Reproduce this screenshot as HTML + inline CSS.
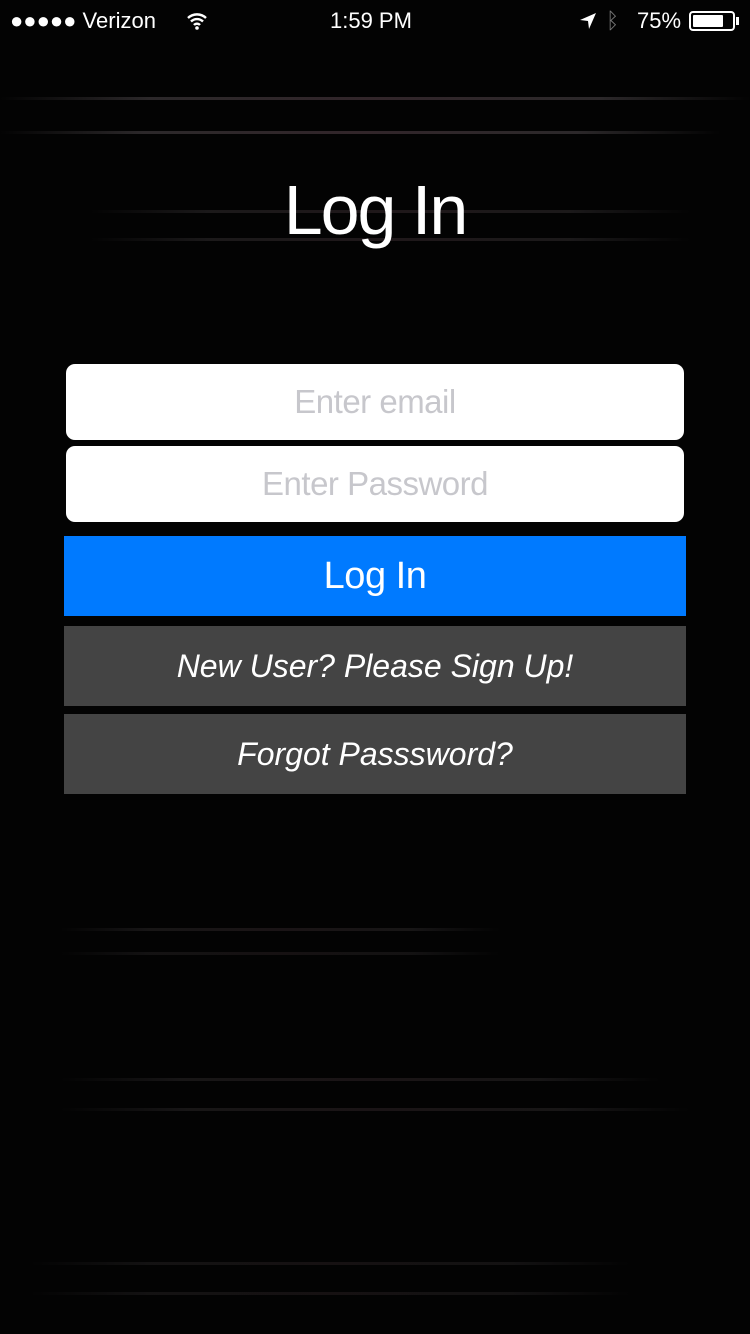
<!DOCTYPE html>
<html><head><meta charset="utf-8"><style>
*{margin:0;padding:0;box-sizing:border-box}
body{width:750px;height:1334px;background:#030303;position:relative;overflow:hidden;font-family:"Liberation Sans",sans-serif;color:#fff}
.ln{position:absolute;height:3px;background:linear-gradient(90deg,transparent,rgba(120,110,115,.35) 20%,rgba(120,90,100,.4) 50%,rgba(120,110,115,.35) 80%,transparent)}
.sb{position:absolute;top:8px;font-size:22px;height:26px}
.title{position:absolute;top:170px;width:100%;text-align:center;font-size:70px;letter-spacing:-2px}
.inp{position:absolute;left:66px;width:618px;height:76px;background:#fff;border-radius:9px;color:#c7c7cc;font-size:33px;text-align:center;line-height:76px;letter-spacing:-0.5px}
.btn{position:absolute;left:64px;width:622px;height:80px;text-align:center;line-height:80px}
</style></head><body>
<div class="ln" style="top:97px;left:0;width:750px"></div>
<div class="ln" style="top:131px;left:0;width:720px"></div>
<div class="ln" style="top:210px;left:90px;width:600px;opacity:.6"></div>
<div class="ln" style="top:238px;left:90px;width:600px;opacity:.6"></div>
<div class="ln" style="top:928px;left:60px;width:440px;opacity:.5"></div>
<div class="ln" style="top:952px;left:60px;width:440px;opacity:.4"></div>
<div class="ln" style="top:1078px;left:60px;width:600px;opacity:.5"></div>
<div class="ln" style="top:1108px;left:60px;width:630px;opacity:.5"></div>
<div class="ln" style="top:1262px;left:30px;width:600px;opacity:.4"></div>
<div class="ln" style="top:1292px;left:30px;width:600px;opacity:.4"></div>
<div class="sb" style="left:10px">●●●●● Verizon</div>
<svg style="position:absolute;left:186px;top:12px" width="22" height="18" viewBox="0 0 22 18"><path d="M2 6a13 13 0 0 1 18 0M5 9.5a8.5 8.5 0 0 1 12 0M8 13a4 4 0 0 1 6 0" stroke="#fff" stroke-width="2.4" fill="none"/><circle cx="11" cy="16" r="1.8" fill="#fff"/></svg>
<div class="sb" style="left:330px">1:59 PM</div>
<svg style="position:absolute;left:578px;top:11px" width="20" height="20" viewBox="0 0 20 20"><path d="M18 2 2 9l8 1 1 8z" fill="#fff"/></svg>
<div class="sb" style="left:606px;color:#777">ᛒ</div>
<div class="sb" style="left:637px">75%</div>
<div style="position:absolute;left:689px;top:11px;width:46px;height:20px;border:2px solid #fff;border-radius:4px;padding:2px"><div style="width:30px;height:12px;background:#fff;border-radius:1px"></div></div>
<div style="position:absolute;left:736px;top:17px;width:3px;height:8px;background:#fff"></div>
<div class="title">Log In</div>
<div class="inp" style="top:364px">Enter email</div>
<div class="inp" style="top:446px">Enter Password</div>
<div class="btn" style="top:536px;background:#007aff;font-size:38px;letter-spacing:-0.5px">Log In</div>
<div class="btn" style="top:626px;background:#444;font-size:32px;font-style:italic">New User? Please Sign Up!</div>
<div class="btn" style="top:714px;background:#444;font-size:32px;font-style:italic">Forgot Passsword?</div>
</body></html>
